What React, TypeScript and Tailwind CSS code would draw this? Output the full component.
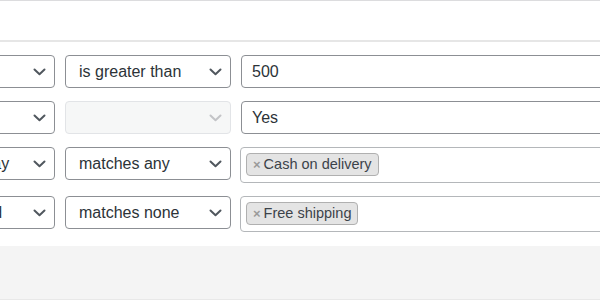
import React from "react";

type Row = {
  field: string;
  operator?: string;
  value?: string;
  tags?: string[];
};

const rows: Row[] = [
  { field: "Cart total", operator: "is greater than", value: "500" },
  { field: "Has coupon", value: "Yes" },
  { field: "Payment gateway", operator: "matches any", tags: ["Cash on delivery"] },
  { field: "Shipping method", operator: "matches none", tags: ["Free shipping"] },
];

function Chevron({ disabled }: { disabled?: boolean }) {
  return (
    <svg width="13" height="8" viewBox="0 0 13 8" fill="none" className="absolute right-[8px] top-1/2 -translate-y-1/2">
      <path
        d="M1.5 1.5 L6.5 6.2 L11.5 1.5"
        stroke={disabled ? "#c3c4c7" : "#50575e"}
        strokeWidth="2"
        strokeLinecap="round"
        strokeLinejoin="round"
      />
    </svg>
  );
}

function SelectBox({ label, width, disabled }: { label?: string; width: string; disabled?: boolean }) {
  return (
    <div
      className={`relative flex h-[33px] shrink-0 items-center overflow-hidden whitespace-nowrap rounded-[4px] border pl-[13px] text-[16px] text-[#2c3338] ${width} ${
        disabled ? "border-[#e2e4e7] bg-[#f6f7f7]" : "border-[#8c8f94] bg-white"
      }`}
    >
      <span>{label}</span>
      <Chevron disabled={disabled} />
    </div>
  );
}

function TagBox({ tags }: { tags: string[] }) {
  return (
    <div className="ml-[-1px] flex h-[36px] w-[420px] shrink-0 items-start gap-1 rounded-[4px] border border-[#b4b7ba] bg-white px-[5px] pt-[5px]">
      {tags.map((tag) => (
        <span
          key={tag}
          className="flex h-[23px] items-center rounded-[4px] border border-[#b0b0b0] bg-[#e4e4e4] pl-[6px] pr-[6px] text-[14.5px] text-[#3c434a]"
        >
          <span className="mr-[3px] text-[13px] font-bold text-[#9a9a9a]">×</span>
          {tag}
        </span>
      ))}
    </div>
  );
}

export default function App() {
  return (
    <div
      className="flex h-[300px] w-[600px] flex-col overflow-hidden bg-white"
      style={{ fontFamily: '"Liberation Sans", Arial, sans-serif' }}
    >
      <div className="h-[42px] shrink-0 border-t border-b-2 border-t-[#dcdcde] border-b-[#e6e6e6]" />

      <div className="flex shrink-0 flex-col gap-[13px] pt-[13px] pb-[14px]">
        {rows.map((row) => (
          <div key={row.field} className="ml-[-132px] flex items-start gap-[10px]">
            <SelectBox label={row.field} width="w-[187px]" />
            <SelectBox label={row.operator} width="w-[166px]" disabled={!row.operator} />
            {row.tags ? (
              <TagBox tags={row.tags} />
            ) : (
              <div className="flex h-[33px] w-[420px] shrink-0 items-center rounded-[4px] border border-[#8c8f94] bg-white px-[10px] text-[16px] text-[#2c3338]">
                {row.value}
              </div>
            )}
          </div>
        ))}
      </div>

      <div className="flex-1 border-b border-[#e8e8e8] bg-[#f4f4f4]" />
    </div>
  );
}
